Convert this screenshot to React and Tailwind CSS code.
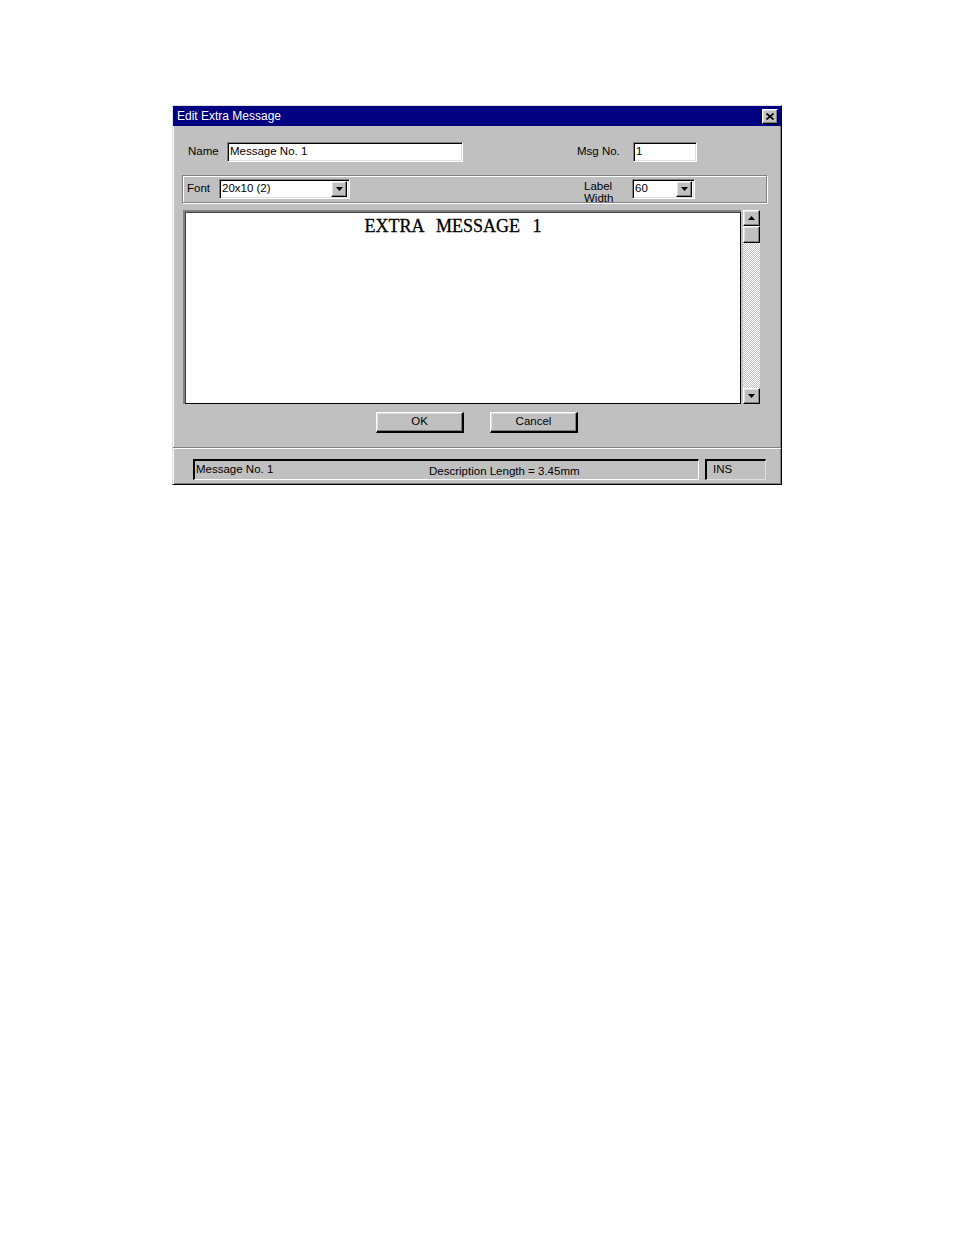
import React from "react";

const raised =
  "bg-[#c0c0c0] border border-t-white border-l-white border-r-black border-b-black shadow-[inset_-1px_-1px_0_#808080,inset_1px_1px_0_#dfdfdf]";
const sunken =
  "bg-white border border-t-[#808080] border-l-[#808080] border-r-white border-b-white shadow-[inset_1px_1px_0_#000,inset_-1px_-1px_0_#dfdfdf]";

const Arrow = ({ up }) => (
  <svg width="7" height="4" viewBox="0 0 7 4">
    <polygon points={up ? "3.5,0 7,4 0,4" : "0,0 7,0 3.5,4"} fill="#000" />
  </svg>
);

const Select = ({ value, width }) => (
  <div className={`${sunken} h-[20px] flex items-center justify-between pl-[2px] pr-[2px]`} style={{ width }}>
    <span className="leading-none">{value}</span>
    <div className={`${raised} w-[16px] h-[16px] flex items-center justify-center`}>
      <Arrow />
    </div>
  </div>
);

const App = () => {
  return (
    <div className="w-[954px] h-[1235px] bg-white pt-[105px] pl-[172px] font-['Liberation_Sans',Arial,sans-serif] text-[11.5px] text-black">
      {/* Dialog window */}
      <div className="w-[610px] h-[380px] bg-[#c0c0c0] border border-t-[#dfdfdf] border-l-[#dfdfdf] border-r-black border-b-black shadow-[inset_1px_1px_0_#fff,inset_-1px_-1px_0_#808080] flex flex-col">
        {/* Title bar */}
        <div className="h-[20px] bg-[#000080] flex items-center justify-between pl-[4px] pr-[3px]">
          <span className="text-white text-[12px] leading-none">Edit Extra Message</span>
          <div className={`${raised} w-[16px] h-[15px] flex items-center justify-center`}>
            <svg width="8" height="7" viewBox="0 0 8 7">
              <path d="M0.5 0.5 L7.5 6.5 M7.5 0.5 L0.5 6.5" stroke="#000" strokeWidth="1.6" />
            </svg>
          </div>
        </div>

        {/* Name / Msg No. */}
        <div className="mt-[16px] h-[20px] flex items-center pl-[15px]">
          <span className="w-[39px]">Name</span>
          <div className={`${sunken} w-[236px] h-[20px] flex items-center px-[2px]`}>Message No. 1</div>
          <span className="ml-[114px] w-[56px]">Msg No.</span>
          <div className={`${sunken} w-[64px] h-[20px] flex items-center px-[2px]`}>1</div>
        </div>

        {/* Font group */}
        <div className="mt-[13px] ml-[9px] w-[585px] h-[28px] border border-[#808080] shadow-[1px_1px_0_#fff,inset_1px_1px_0_#fff] flex items-center pl-[4px]">
          <span className="w-[32px]">Font</span>
          <Select value="20x10 (2)" width="131px" />
          <div className="ml-[234px] w-[48px] leading-[12px] text-left pt-[5px]">
            Label
            <br />
            Width
          </div>
          <Select value="60" width="63px" />
        </div>

        {/* Message editor */}
        <div className="mt-[7px] ml-[10px] h-[194px] flex gap-[2px]">
          <div className="w-[558px] h-full border-t-2 border-l-2 border-[#808080] border-r-0 border-b-0">
            <div className="h-full bg-white border border-black border-t-[#404040] border-l-[#404040] pt-[3px] pr-[20px] text-center">
              <span className="font-['Liberation_Serif',serif] text-[18px] leading-[20px] whitespace-pre [word-spacing:8px] [-webkit-text-stroke:0.3px_#000]">
                EXTRA MESSAGE 1
              </span>
            </div>
          </div>
          <div className="w-[17px] h-full flex flex-col">
            <div className={`${raised} h-[16px] flex items-center justify-center`}>
              <Arrow up />
            </div>
            <div className={`${raised} h-[17px]`} />
            <div className="flex-1 bg-[image:repeating-conic-gradient(#c0c0c0_0_25%,#ffffff_0_50%)] bg-[length:2px_2px]" />
            <div className={`${raised} h-[16px] flex items-center justify-center`}>
              <Arrow />
            </div>
          </div>
        </div>

        {/* Buttons */}
        <div className="mt-[8px] flex justify-center gap-[26px]">
          <button className={`${raised} w-[88px] h-[21px] border-r-2 border-b-2 leading-none`}>OK</button>
          <button className={`${raised} w-[88px] h-[21px] border-r-2 border-b-2 leading-none`}>Cancel</button>
        </div>

        {/* Separator */}
        <div className="mt-[14px] h-[2px] border-t border-[#808080] border-b border-b-white" />

        {/* Status bar */}
        <div className="mt-[10px] ml-[20px] flex gap-[6px]">
          <div className="w-[506px] h-[21px] border-t-2 border-l-2 border-black border-r border-b border-r-white border-b-white flex items-center pl-[1px]">
            <span className="w-[233px]">Message No. 1</span>
            <span className="mt-[3px]">Description Length = 3.45mm</span>
          </div>
          <div className="w-[61px] h-[21px] border-t-2 border-l-2 border-black border-r border-b border-r-[#dfdfdf] border-b-[#dfdfdf] flex items-center pl-[6px]">
            INS
          </div>
        </div>
      </div>
    </div>
  );
};

export default App;
